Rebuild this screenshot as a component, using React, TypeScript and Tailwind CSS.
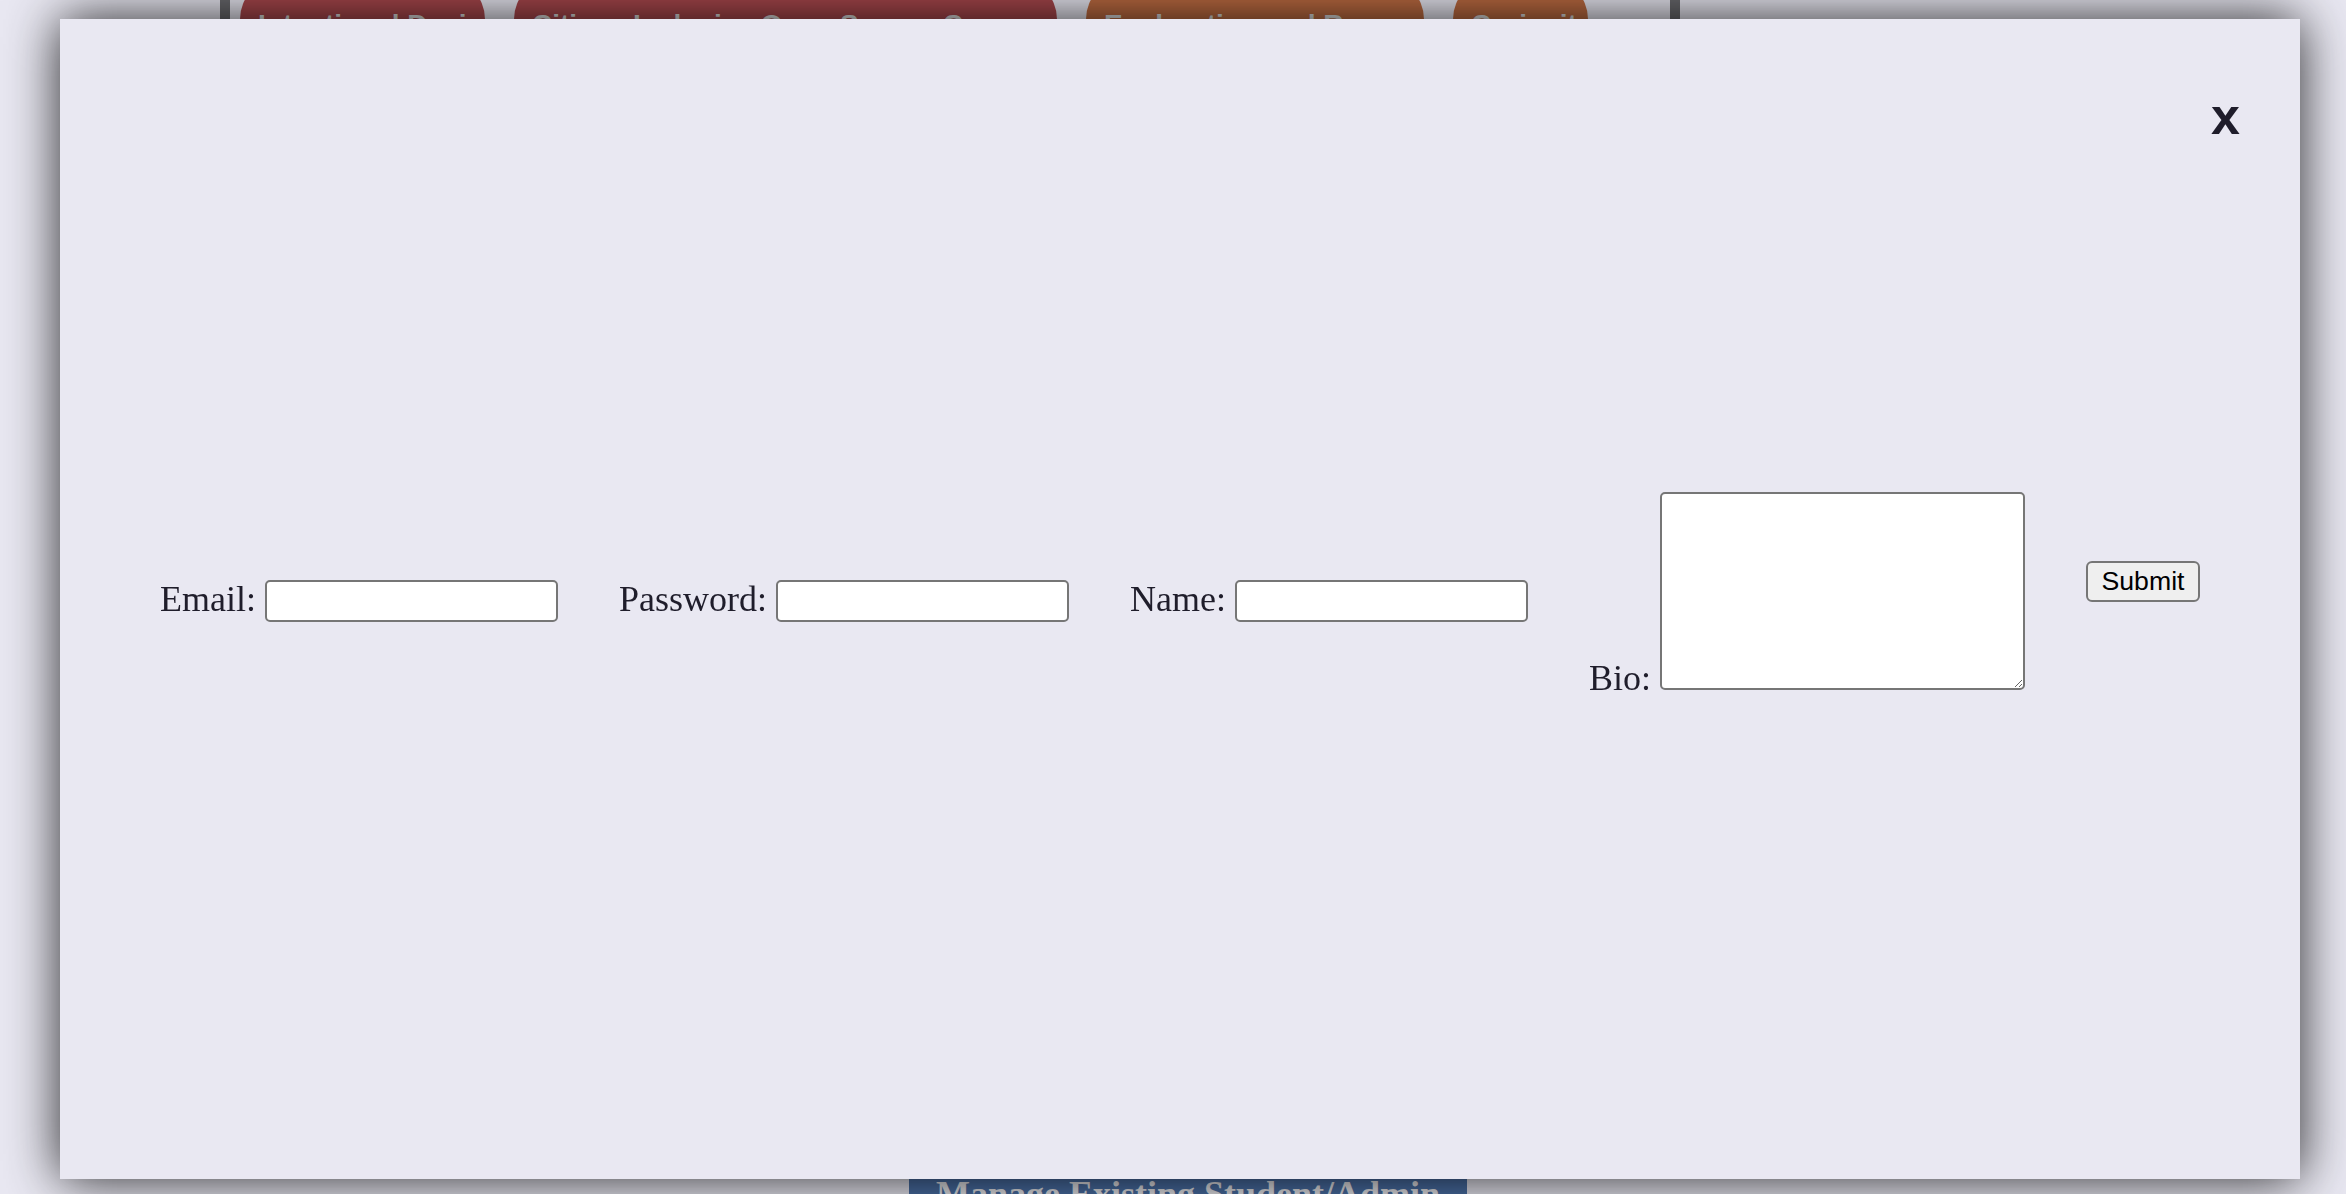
import React from "react";

const serif = { fontFamily: '"Liberation Serif", "Times New Roman", serif' };
const sans = { fontFamily: '"Liberation Sans", Arial, sans-serif' };

function Tab({ label, w, color }: { label: string; w: string; color: string }) {
  return (
    <div
      className={`flex h-[80px] shrink-0 overflow-hidden whitespace-nowrap rounded-full px-[18px] pt-[32px] text-[28px] font-bold leading-none text-[#dcdcdc] ${w} ${color}`}
      style={sans}
    >
      {label}
    </div>
  );
}

export default function App() {
  return (
    <div className="relative h-[1194px] w-full overflow-hidden bg-[#e9e8f2]" style={serif}>
      {/* page behind the modal */}
      <div className="-mt-[21px] ml-[220px] flex h-[80px] w-[1460px] gap-[29px] border-x-[10px] border-[#6a6a6e] pl-[10px]">
        <Tab label="Intentional Design" w="w-[245px]" color="bg-[#a8474c]" />
        <Tab label="Citizen-Inclusive Open Source Community" w="w-[543px]" color="bg-[#a8474c]" />
        <Tab label="Exploration and Research" w="w-[338px]" color="bg-[#bd6b41]" />
        <Tab label="Curiosity" w="w-[135px]" color="bg-[#bd6b41]" />
      </div>
      <div className="ml-[909px] mt-[1105px] w-[558px] bg-[#4a6fa5] py-[12px] text-center text-[36px] font-bold leading-none text-[#e8e8ec]">
        Manage Existing Student/Admin
      </div>

      {/* modal */}
      <div className="fixed left-[60px] top-[19px] flex h-[1160px] w-[2240px] flex-col bg-[#e9e8f2] text-[#1f1d2b] shadow-[0_0_50px_rgba(0,0,0,0.85)]">
        <div className="flex justify-end pr-[60px] pt-[71px]">
          <span className="cursor-pointer text-[52px] font-bold leading-none text-[#1f1d2b]" style={sans}>
            x
          </span>
        </div>
        <form className="mt-[350px] flex items-start justify-between px-[100px]">
          <label className="mt-[88px] flex items-end gap-[9px]">
            <span className="mb-[5px] text-[36px] leading-none">Email:</span>
            <input
              type="text"
              className="h-[42px] w-[293px] rounded-[5px] border-2 border-[#767676] bg-white"
            />
          </label>
          <label className="mt-[88px] flex items-end gap-[9px]">
            <span className="mb-[5px] text-[36px] leading-none">Password:</span>
            <input
              type="password"
              className="h-[42px] w-[293px] rounded-[5px] border-2 border-[#767676] bg-white"
            />
          </label>
          <label className="mt-[88px] flex items-end gap-[9px]">
            <span className="mb-[5px] text-[36px] leading-none">Name:</span>
            <input
              type="text"
              className="h-[42px] w-[293px] rounded-[5px] border-2 border-[#767676] bg-white"
            />
          </label>
          <label className="flex items-end gap-[9px]">
            <span className="-mb-[6px] text-[36px] leading-none">Bio:</span>
            <textarea className="h-[198px] w-[365px] resize rounded-[5px] border-2 border-[#767676] bg-white" />
          </label>
          <button
            type="button"
            className="mt-[69px] h-[41px] w-[114px] rounded-[6px] border-2 border-[#767676] bg-[#efefef] text-[26.67px] leading-none text-black"
            style={sans}
          >
            Submit
          </button>
        </form>
      </div>
    </div>
  );
}
